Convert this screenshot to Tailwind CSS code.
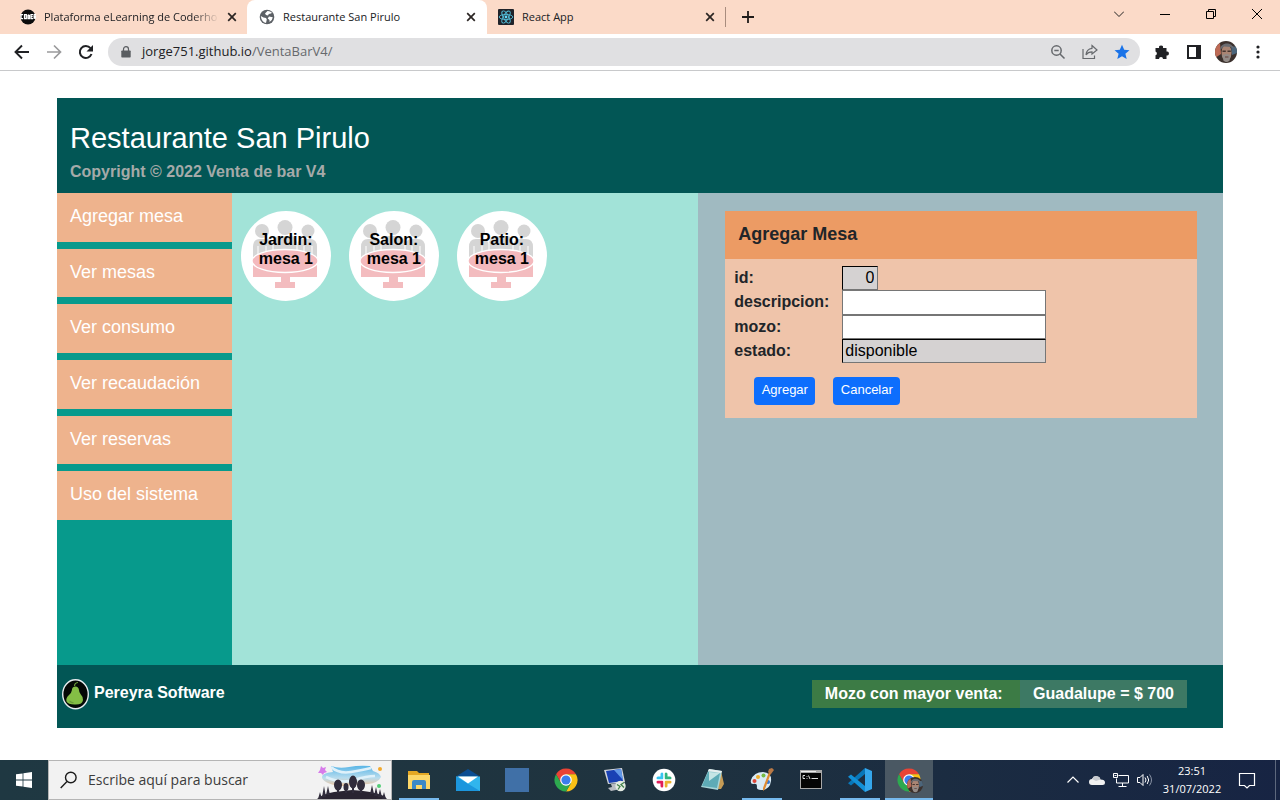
<!DOCTYPE html>
<html lang="es">
<head>
<meta charset="utf-8">
<title>Restaurante San Pirulo</title>
<script src="https://cdn.jsdelivr.net/npm/@tailwindcss/browser@4"></script>
</head>
<body class="min-h-screen flex flex-col bg-white font-['Open_Sans','Noto_Sans',sans-serif] text-[#202124]">

<!-- Reusable symbols -->
<svg class="hidden">
  <symbol id="x" viewBox="0 0 10 10"><path d="M1.2 1.2l7.6 7.6M8.800 1.200l-7.600 7.600" stroke="#2b2523" stroke-width="1.700" fill="none"/></symbol>
  <symbol id="chrome" viewBox="0 0 24 24">
    <path d="M2.040 6.250A11.500 11.500 0 0 1 21.960 6.250H12L7 14.900z" fill="#ea4335"/>
    <path d="M21.960 6.250A11.500 11.500 0 0 1 12 23.500L17 14.900L12 6.250z" fill="#fbc116"/>
    <path d="M12 23.500A11.500 11.500 0 0 1 2.040 6.250L7 14.900H17z" fill="#2da94f"/>
    <circle cx="12" cy="12" r="5.800" fill="#fff"/><circle cx="12" cy="12" r="4.600" fill="#3b7ded"/>
  </symbol>
  <symbol id="face" viewBox="0 0 22 22">
    <path d="M0 0h22v22H0z" fill="#3b302c"/><path d="M0 5l5-3 1 11-6 4z" fill="#bd6a55"/><path d="M16 5l6 1v6l-5 2z" fill="#4b657b"/><ellipse cx="11.500" cy="11.500" rx="5" ry="8" fill="#a98473"/><path d="M5 9c0-8 12-9 14-1l-3-2-7-.5z" fill="#6a6b70"/><path d="M7.500 9.500h3.300v1.500H7.500zM12.500 9.500h3.300v1.500h-3.300z" fill="#46352f"/><path d="M7 14.500q4.500-3 9 0l-1.500 5q-3 3-6 0z" fill="#938b87"/><path d="M10 15.500h3.500v1H10z" fill="#68433d"/>
  </symbol>
  <symbol id="table" viewBox="0 0 90 90">
    <g fill="#d5d5d5"><circle cx="21" cy="20" r="7"/><circle cx="44" cy="16.500" r="7.500"/><circle cx="67" cy="20" r="6.500"/>
    <path d="M12 48V36q0-8 7-8h6q5 0 7 5 1-8 6-8h12q5 0 6 8 2-5 7-5h6q7 0 7 8v12z"/></g>
    <path d="M17 35v8M25 35v6M63 35v6M71 35v8M32 32v7M56 32v7" stroke="#fff" stroke-width="1"/>
    <path d="M12 46h64v20H12z" fill="#f3bcbf"/>
    <ellipse cx="44" cy="50" rx="33" ry="11.500" fill="#f4b9bd" stroke="#fff" stroke-width="1.300"/>
    <path d="M40 66h9v5h5v6H34v-6h6z" fill="#f3bcbf"/>
  </symbol>
</svg>

<!-- Tab strip -->
<div class="flex h-[34px] bg-[#fbdac8] text-[11px]">
  <div class="flex w-[247px] items-center gap-2 pl-5 pr-[10px]">
    <svg class="size-4 shrink-0" viewBox="0 0 16 16"><circle cx="8" cy="8" r="7.500" fill="#0c0c0c"/><g fill="none" stroke="#fff" stroke-width="1.300"><path d="M3 5.700H1v4h2M5 5.700h1.300v4H4.500v-4zM8 5.700v4h1.400V6.500L8 5.700M13 5.700h-2v4h2M11 7.700h1.700M14.200 10V5.700H16v2h-1.500l1.500 2"/></g></svg>
    <span class="grow whitespace-nowrap mask-r-from-85%">Plataforma eLearning de Coderho</span>
    <button class="shrink-0" aria-label="Cerrar pestaña"><svg class="size-[10px]"><use href="#x"/></svg></button>
  </div>
  <div class="flex w-60 items-center gap-2 rounded-t-lg bg-white pl-3 pr-[11px]">
    <svg class="size-4 shrink-0" viewBox="0 0 16 16"><circle cx="8" cy="8" r="7.300" fill="#5c6065"/><path d="M8.500 2L6 4.500l1 1.500L9 6.500l.8-1.500L12 4.500l1-.8Q11 1.800 8.500 2zM1.800 7l2.700 1.500L7 9l.8 1.500L7 14Q2.500 13 1.800 7zM10 7.500l3.800.8q-.3 3-3.300 4.700L10.500 11 8.700 9.500z" fill="#fff"/></svg>
    <span class="grow whitespace-nowrap">Restaurante San Pirulo</span>
    <button class="shrink-0" aria-label="Cerrar pestaña"><svg class="size-[10px]"><use href="#x"/></svg></button>
  </div>
  <div class="flex w-[239px] items-center gap-2 pl-[11px] pr-[11px]">
    <svg class="size-4 shrink-0" viewBox="0 0 16 16"><rect width="16" height="16" rx="1" fill="#20232a"/><g fill="none" stroke="#52bdd8" stroke-width=".9"><ellipse cx="8" cy="8" rx="6.800" ry="2.600"/><ellipse cx="8" cy="8" rx="6.800" ry="2.600" transform="rotate(60 8 8)"/><ellipse cx="8" cy="8" rx="6.800" ry="2.600" transform="rotate(120 8 8)"/></g><circle cx="8" cy="8" r="1.400" fill="#61dafb"/></svg>
    <span class="grow whitespace-nowrap">React App</span>
    <button class="shrink-0" aria-label="Cerrar pestaña"><svg class="size-[10px]"><use href="#x"/></svg></button>
  </div>
  <div class="mt-[7px] -ml-px h-5 w-px bg-[#a88c7e]"></div>
  <button class="ml-4" aria-label="Nueva pestaña"><svg class="size-3" viewBox="0 0 12 12"><path d="M6 0v12M0 6h12" stroke="#1f1b1a" stroke-width="1.800"/></svg></button>
  <div class="ml-auto flex h-7 items-center">
    <button class="flex w-[46px] justify-center" aria-label="Buscar pestañas"><svg class="size-[10px]" viewBox="0 0 10 10"><path d="M0 2.500L5 7.500l5-5" stroke="#222" fill="none"/></svg></button>
    <button class="flex w-[46px] justify-center" aria-label="Minimizar"><svg class="size-[10px]" viewBox="0 0 10 10"><path d="M0 5.500h10" stroke="#000"/></svg></button>
    <button class="flex w-[46px] justify-center" aria-label="Restaurar"><svg class="size-[10px]" viewBox="0 0 10 10"><path d="M.500 2.500h7v7h-7zM2.500 2.500v-2h7v7h-2" stroke="#000" fill="none"/></svg></button>
    <button class="flex w-[46px] justify-center" aria-label="Cerrar"><svg class="size-[10px]" viewBox="0 0 10 10"><path d="M0 0l10 10M10 0L0 10" stroke="#000" fill="none"/></svg></button>
  </div>
</div>

<!-- Toolbar -->
<div class="flex h-[37px] items-center border-b border-[#c8c9cb] pl-[14px] pr-[14px]">
  <button aria-label="Atrás"><svg class="size-4" viewBox="0 0 16 16"><path d="M15 8H2M8 1.500L1.500 8L8 14.500" stroke="#202124" stroke-width="1.900" fill="none"/></svg></button>
  <button class="ml-4" aria-label="Adelante"><svg class="size-4" viewBox="0 0 16 16"><path d="M1 8h13M8 1.500L14.500 8L8 14.500" stroke="#9a9a9c" stroke-width="1.700" fill="none"/></svg></button>
  <button class="ml-4" aria-label="Recargar"><svg class="size-4" viewBox="0 0 16 16"><path d="M13.500 10A6 6 0 1 1 12.500 4.200" stroke="#202124" stroke-width="2" fill="none"/><path d="M15 1v6.500H8.500z" fill="#202124"/></svg></button>
  <div class="ml-[14px] flex h-7 grow items-center rounded-full bg-[#e0e0e2] pl-[13px] pr-[10px]">
    <svg class="h-3 w-[10px]" viewBox="0 0 10 12"><path d="M1 4.500h8q.7 0 .7.700v5.600q0 .7-.7.700H1q-.7 0-.7-.700V5.200q0-.7.700-.700z" fill="#5a5d61"/><path d="M2.500 5V3.200a2.500 2.500 0 0 1 5 0V5" stroke="#5a5d61" stroke-width="1.200" fill="none"/></svg>
    <label for="url" class="ml-[11px] text-[13px]">jorge751.github.io</label>
    <input id="url" value="/VentaBarV4/" class="min-w-0 grow bg-transparent text-[13px] text-[#66696d] outline-none">
    <button aria-label="Zoom"><svg class="size-4" viewBox="0 0 16 16"><g stroke="#66696d" stroke-width="1.500" fill="none"><circle cx="6.500" cy="6.500" r="4.700"/><path d="M10 10l4.500 4.500M4.300 6.500h4.400"/></g></svg></button>
    <button class="ml-4" aria-label="Compartir"><svg class="size-4" viewBox="0 0 16 16"><path d="M1 5v9.500h11.500V11.500M10 1.500l5 4.500-5 4V7.800q-4 0-6 3Q4.500 5 10 4.300z" stroke="#66696d" stroke-width="1.200" fill="none"/></svg></button>
    <button class="ml-4" aria-label="Favorito"><svg class="size-4" viewBox="0 0 16 16"><path d="M8 .8l2.200 5 5.300.4-4.100 3.500 1.300 5.300L8 12.200 3.300 15l1.300-5.300L.5 6.200l5.300-.4z" fill="#1a73e8"/></svg></button>
  </div>
  <button class="ml-[14px]" aria-label="Extensiones"><svg class="size-4" viewBox="0 0 16 16"><path d="M1.500 4h3.600a2 2 0 1 1 3.900 0H12.500v3.600a2 2 0 1 1 0 3.900V15H9a2 2 0 0 0-4 0H1.500v-3.700a2 2 0 0 0 0-3.800z" fill="#202124"/></svg></button>
  <button class="ml-4" aria-label="Panel lateral"><svg class="size-4" viewBox="0 0 16 16"><path d="M2 2h12v12H2z" stroke="#202124" stroke-width="2" fill="none"/><path d="M10 2h4v12h-4z" fill="#202124"/></svg></button>
  <button class="ml-[13px]" aria-label="Perfil"><svg class="size-[22px] rounded-full"><use href="#face"/></svg></button>
  <button class="ml-[13px]" aria-label="Menú"><svg class="size-4" viewBox="0 0 16 16"><g fill="#202124"><circle cx="8" cy="3" r="1.600"/><circle cx="8" cy="8" r="1.600"/><circle cx="8" cy="13" r="1.600"/></g></svg></button>
</div>

<!-- Application -->
<div class="flex grow flex-col px-[57px] pt-[27px] pb-8 font-['Liberation_Sans',Arial,sans-serif]">
  <header class="h-[95px] bg-[#025655] pl-[13px] pt-6">
    <h1 class="text-[29px] leading-8 text-white">Restaurante San Pirulo</h1>
    <p class="mt-[6px] text-base leading-6 font-bold text-[#a5aaa9]">Copyright © 2022 Venta de bar V4</p>
  </header>
  <main class="grid grow grid-cols-[15fr_40fr_45fr]">
    <nav class="bg-[#079a8c]">
      <div class="grid h-[327px] grid-rows-6 gap-[7px] text-lg leading-6 text-white">
        <a href="#" class="bg-[#eeb38d] pl-[13px] pt-[11px]">Agregar mesa</a>
        <a href="#" class="bg-[#eeb38d] pl-[13px] pt-[11px]">Ver mesas</a>
        <a href="#" class="bg-[#eeb38d] pl-[13px] pt-[11px]">Ver consumo</a>
        <a href="#" class="bg-[#eeb38d] pl-[13px] pt-[11px]">Ver recaudación</a>
        <a href="#" class="bg-[#eeb38d] pl-[13px] pt-[11px]">Ver reservas</a>
        <a href="#" class="bg-[#eeb38d] pl-[13px] pt-[11px]">Uso del sistema</a>
      </div>
    </nav>
    <section class="flex items-start gap-[18px] bg-[#a2e3d8] pl-[9px] pt-[18px] text-base leading-[19px] font-bold text-black">
      <button class="relative size-[90px] rounded-full bg-white pb-[14px]"><svg class="absolute inset-0 size-full"><use href="#table"/></svg><span class="relative block">Jardin:<br>mesa 1</span></button>
      <button class="relative size-[90px] rounded-full bg-white pb-[14px]"><svg class="absolute inset-0 size-full"><use href="#table"/></svg><span class="relative block">Salon:<br>mesa 1</span></button>
      <button class="relative size-[90px] rounded-full bg-white pb-[14px]"><svg class="absolute inset-0 size-full"><use href="#table"/></svg><span class="relative block">Patio:<br>mesa 1</span></button>
    </section>
    <section class="bg-[#a0bac1] pr-[26px] pl-[27px] pt-[18px]">
      <form class="bg-[#efc4aa] pb-[13px] text-[#212529]">
        <h2 class="h-12 bg-[#ec9b64] pl-[13px] pt-[11px] text-lg leading-6 font-bold">Agregar Mesa</h2>
        <div class="mt-[7px] grid h-[97px] grid-cols-[108px_204px] grid-rows-4 items-center pl-[9px] text-base leading-5">
          <label for="id" class="font-bold">id:</label>
          <input id="id" value="0" readonly class="h-full w-9 border border-[#767676] border-t-black border-l-black bg-[#d5d2d2] px-[3px] text-right text-black">
          <label for="desc" class="font-bold">descripcion:</label>
          <input id="desc" class="h-full border border-[#767676] bg-white px-[2px]">
          <label for="mozo" class="font-bold">mozo:</label>
          <input id="mozo" class="h-full border border-[#767676] bg-white px-[2px]">
          <label for="estado" class="font-bold">estado:</label>
          <input id="estado" value="disponible" readonly class="h-full border border-[#767676] border-t-black border-l-black bg-[#d5d2d2] px-[2px] text-black">
        </div>
        <div class="mt-[14px] flex gap-[18px] pl-[29px] text-[13px] leading-5 text-white">
          <button type="button" class="h-7 w-[61px] rounded-sm bg-[#0d6efd] pb-[2px]">Agregar</button>
          <button type="button" class="h-7 w-[67px] rounded-sm bg-[#0d6efd] pb-[2px]">Cancelar</button>
        </div>
      </form>
    </section>
  </main>
  <footer class="flex h-[63px] items-start justify-between bg-[#025655] pt-[14px] pl-[5px] pr-9 text-base leading-6 font-bold text-white">
    <div class="flex gap-1">
      <svg class="h-[31px] w-7" viewBox="0 0 28 31"><ellipse cx="13.500" cy="15.300" rx="12.800" ry="14.500" fill="#050806" stroke="#e6ecef" stroke-width="1.400"/><path d="M13.500 7.500q-3.500 0-3.700 4Q9.500 14 7 16q-3.500 3-2.500 6.500Q6 25.500 12.500 25.500q8 .5 8.500-4.500 0-3.500-2.500-6-1.500-2-1.500-4Q16.500 7.500 13.500 7.500z" fill="#84be45"/><path d="M12.500 7q0-3 3.500-3.500M7.500 22q2 2 4 1.500" stroke="#6b9c38" stroke-width="1.200" fill="none"/></svg>
      <span class="pt-[2px]">Pereyra Software</span>
    </div>
    <div class="mt-px flex h-7">
      <span class="bg-[#3c7b45] px-[13px] pt-[2px]">Mozo con mayor venta:&nbsp;</span>
      <span class="bg-[#3d7964] px-[13px] pt-[2px]">Guadalupe = $ 700</span>
    </div>
  </footer>
</div>

<!-- Taskbar -->
<div class="flex h-10 bg-linear-to-r from-[#1f3842] via-[#1f333f] to-[#172443] text-white">
  <button class="flex w-12 items-center justify-center" aria-label="Inicio"><svg class="size-4" viewBox="0 0 16 16"><path d="M0 2.300l6.600-.9v6.100H0zM7.400 1.300L16 0v7.500H7.400zM0 8.400h6.600v6.200L0 13.700zM7.400 8.400H16V16l-8.600-1.200z" fill="#fff"/></svg></button>
  <div class="flex w-[344px] items-center border border-[#b5b5b5] bg-[#f2f2f2] pl-[11px]">
    <svg class="size-[18px] shrink-0" viewBox="0 0 18 18"><g stroke="#1b1b1b" stroke-width="1.400" fill="none"><circle cx="10.800" cy="6.500" r="5.300"/><path d="M7 10.500L.700 17"/></g></svg>
    <input aria-label="Buscar" placeholder="Escribe aquí para buscar" class="ml-[10px] min-w-0 grow bg-transparent text-sm outline-none placeholder:text-[#3c3c3c]">
    <svg class="mr-1 h-[38px] w-[70px] shrink-0" viewBox="0 0 70 38">
      <defs><linearGradient id="sky" x2="0" y2="1"><stop stop-color="#58b5e6"/><stop offset=".6" stop-color="#b7dcee"/><stop offset="1" stop-color="#eec5a0"/></linearGradient></defs>
      <path d="M14 5q8 3 18 1t21-1l3 5q7 2 8 6-3 6-13 7l-25 2Q9 24 5 17q-1-5 11-6z" fill="url(#sky)"/>
      <path d="M14 6q8 7 20 5t20-4M9 16q15 7 28 3t21-4" stroke="#dff1fa" stroke-width="2.500" fill="none"/>
      <path d="M0 38q5-5 17-7l18-2q20 1 32 6l3 3z" fill="#292431"/>
      <g fill="#302c3b"><ellipse cx="21" cy="24" rx="4" ry="5.500"/><ellipse cx="29" cy="26" rx="2.500" ry="4"/><ellipse cx="36" cy="21" rx="4" ry="6.500"/><ellipse cx="44" cy="24" rx="4" ry="5.500"/>
      <path d="M20 26h2v6h-2zM28 28h2v4h-2zM35 24h2v8h-2zM43 26h2v6h-2zM5 36l2-11 2 11zM9 34l2-9 2 9zM1 38l2-7 2 7zM53 33l2-9 2 9zM57 35l2-9 2 9zM61 36l2-8 2 8zM65 38l2-7 2 7z"/></g>
      <path d="M4 5l2 2 3-1-1 3 2 2-3 1-1 2-2-2-3 0 2-3z" fill="#d77bea"/><circle cx="63" cy="8" r="2" fill="#f2a92d"/><circle cx="62" cy="25" r="2" fill="#52ce76"/>
    </svg>
  </div>
  <div class="ml-[3px] flex gap-px">
    <button class="flex w-12 flex-col items-center pt-2" aria-label="Explorador"><svg class="size-6" viewBox="0 0 24 24"><path d="M1 3h9l2 2h10v16H1z" fill="#e4a824"/><path d="M1 7h22v14H1z" fill="#fcd768"/><path d="M5 21v-7q0-2 2-2h10q2 0 2 2v7h-4v-4H9v4z" fill="#3b89c7"/></svg><span class="mt-auto h-[2px] w-10 bg-[#76b9ed]"></span></button>
    <button class="flex w-12 flex-col items-center pt-2" aria-label="Correo"><svg class="size-6" viewBox="0 0 24 24"><path d="M0 8.500L12 1l12 7.500z" fill="#0a4d92"/><path d="M0 8.500h24V23H0z" fill="#31b5ed"/><path d="M0 8.500L24 23H0z" fill="#1c96dd"/><path d="M2 8.500h20l-10 7z" fill="#fff"/></svg></button>
    <button class="flex w-12 flex-col items-center pt-2" aria-label="Aplicación"><span class="size-6 bg-[#4070a7]"></span></button>
    <button class="flex w-12 flex-col items-center pt-2" aria-label="Chrome"><svg class="size-6"><use href="#chrome"/></svg></button>
    <button class="flex w-12 flex-col items-center pt-2" aria-label="Escritorio remoto"><svg class="size-6" viewBox="0 0 24 24"><path d="M1 2l18-2 3 14-17 2z" fill="#d2d5da"/><path d="M3 3l15-2 2 12-14 2z" fill="#1941b4"/><path d="M11 2l7-1 2 11z" fill="#6098e8"/><path d="M8 16l6-1 1 3 3 3-10 2-3-3 4-1z" fill="#b9bcc2"/><circle cx="17.500" cy="18" r="5.200" fill="#e5ece3"/><path d="M14 16.500l3 2-2 3M21 14.500l-3 2 3 3" stroke="#438249" stroke-width="1.300" fill="none"/></svg></button>
    <button class="flex w-12 flex-col items-center pt-2" aria-label="Slack"><svg class="size-6" viewBox="0 0 24 24"><circle cx="12" cy="12" r="11.300" fill="#fff"/><g stroke-width="3" stroke-linecap="round"><path d="M10 6v4M6 10h4" stroke="#36c5f0"/><path d="M14 6v4M14 10h4" stroke="#2eb67d"/><path d="M14 14v4M14 14h4" stroke="#ecb22e"/><path d="M10 14v4M6 14h4" stroke="#e01e5a"/></g><path d="M12 4v16M4 12h16" stroke="#fff"/></svg></button>
    <button class="flex w-12 flex-col items-center pt-2" aria-label="Bloc de notas"><svg class="size-6" viewBox="0 0 24 24"><path d="M20 3l3 13-3 5-4 0z" fill="#c59b55"/><path d="M8 1l13 2-4 19L0 19z" fill="#a7d5d9"/><path d="M7 4l12 1-3 15L1 18z" fill="#5eabb6"/><path d="M8 4l11 1-11 8z" fill="#c6e5e5"/><path d="M8 1l13 2-1 2L7 3z" fill="#e9efef"/></svg></button>
    <button class="flex w-12 flex-col items-center pt-2" aria-label="Paint"><svg class="size-6" viewBox="0 0 24 24"><path d="M1 12Q4 4 13 4q9 1 8 9-1 9-10 9-5 0-4-4 0-3-4-2-3 0-2-4z" fill="#d9eaf5"/><circle cx="4.500" cy="13" r="2" fill="#df4637"/><circle cx="8" cy="9" r="2" fill="#f0ae2c"/><circle cx="13.500" cy="7.500" r="2" fill="#75bc43"/><circle cx="18" cy="14" r="2" fill="#3277d4"/><path d="M21 5l-6 16-2 2 0-3 6-16z" fill="#df8a31"/><path d="M18 4l1-3 3-1 2 2-3 4z" fill="#b87846"/></svg><span class="mt-auto h-[2px] w-10 bg-[#76b9ed]"></span></button>
    <button class="flex w-12 flex-col items-center pt-2" aria-label="Símbolo del sistema"><svg class="size-6" viewBox="0 0 24 24"><path d="M1 2h22v19H1z" fill="#a8a8a8"/><path d="M2 5h20v15H2z" fill="#050505"/><path d="M2 3h15v1H2z" fill="#eee"/><path d="M6 7.500H4v3h2M8 8v.8M8 10v.8M9.500 7.500l1.500 3.500M12.500 10.500H19" stroke="#ddd" fill="none"/></svg></button>
    <button class="flex w-12 flex-col items-center pt-2" aria-label="Visual Studio Code"><svg class="size-6" viewBox="0 0 24 24"><path d="M17 0v6L3 17.500 0 15.300z" fill="#0877b9"/><path d="M17 24v-6L3 6.500 0 8.700z" fill="#1290d7"/><path d="M17 0l7 3v18l-7 3z" fill="#35a7ec"/></svg><span class="mt-auto h-[2px] w-10 bg-[#76b9ed]"></span></button>
    <button class="flex w-12 flex-col items-center bg-[#4a5863] pt-2" aria-label="Chrome, perfil activo"><span class="relative block size-6"><svg class="size-6"><use href="#chrome"/></svg><svg class="absolute top-[9px] left-[10px] size-4 rounded-full"><use href="#face"/></svg></span><span class="mt-auto h-[2px] w-full bg-[#76b9ed]"></span></button>
  </div>
  <div class="ml-auto flex items-center">
    <button aria-label="Iconos ocultos"><svg class="size-3" viewBox="0 0 12 12"><path d="M.500 8.500L6 3l5.500 5.500" stroke="#fff" stroke-width="1.200" fill="none"/></svg></button>
    <button class="ml-[10px]" aria-label="OneDrive"><svg class="size-4" viewBox="0 0 16 16"><path d="M3 13a3 3 0 0 1 0-6Q5 2.500 9 4.500q2 .5 2.500 3 4.500 0 4.500 3 0 2.500-2.500 2.500z" fill="#f1f1f1"/><path d="M3 7Q5 2.500 9 4.500q2 .5 2.500 3L7 9z" fill="#c8cbd0"/></svg></button>
    <button class="ml-2" aria-label="Red"><svg class="size-4" viewBox="0 0 16 16"><path d="M5.500 3.500h10v7.500h-12V6.500M.500 1.500h4v4h-4zM1.500 3.500h2M9.500 11v3M5.500 14.500h8" stroke="#fff" fill="none"/></svg></button>
    <button class="ml-2" aria-label="Volumen"><svg class="size-4" viewBox="0 0 16 16"><path d="M.500 5.500h2.500l3-3v11l-3-3H.500zM8 5.500q2 2.500 0 5M10.200 4q3 4 0 8" stroke="#fff" fill="none"/><path d="M12.500 2.500q4 5.500 0 11" stroke="#8a93a5" fill="none"/></svg></button>
    <div class="ml-[9px] w-[60px] whitespace-nowrap text-center text-[11px] leading-[18px]">23:51<br>31/07/2022</div>
    <button class="ml-4" aria-label="Notificaciones"><svg class="size-[18px]" viewBox="0 0 18 18"><path d="M1.500 2.500h15v12h-5L9 17l-2.500-2.500h-5z" stroke="#fff" stroke-width="1.200" fill="none"/></svg></button>
    <div class="mr-1 ml-[19px] h-10 w-px bg-[#5d687d]"></div>
  </div>
</div>
</body>
</html>
